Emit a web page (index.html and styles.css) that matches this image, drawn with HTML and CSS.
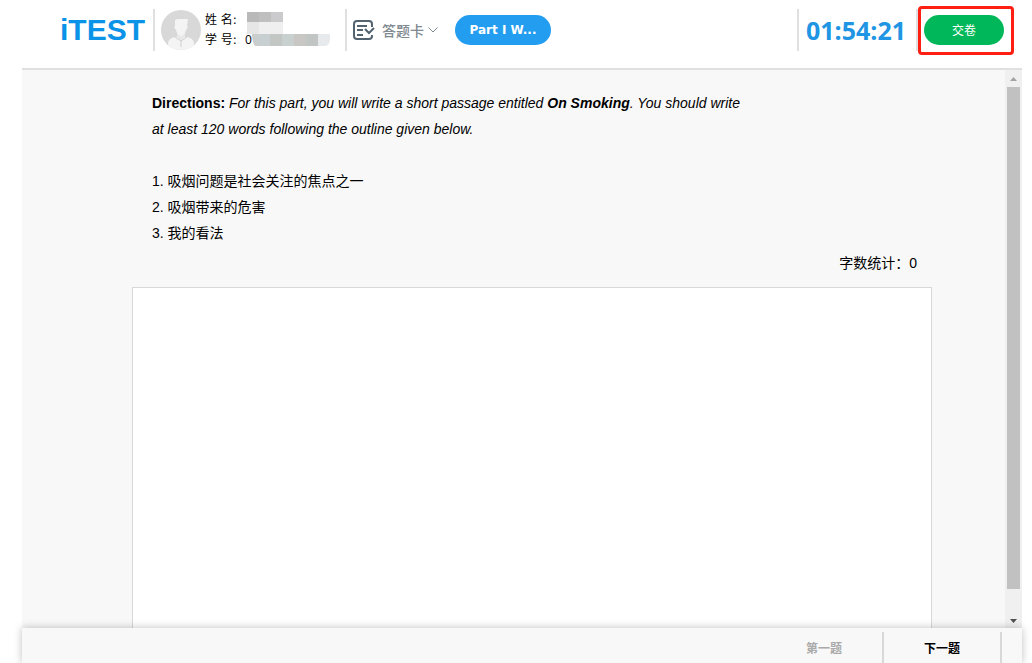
FILE: index.html
```html
<!DOCTYPE html>
<html lang="zh-CN">
<head>
<meta charset="UTF-8" />
<meta name="viewport" content="width=device-width, initial-scale=1" />
<title>iTEST</title>
<link rel="stylesheet" href="styles.css">
</head>
<body>
  <div class="page">
    <header class="topbar">
      <div class="logo">iTEST</div>
      <div class="user">
        <svg class="avatar" width="40" height="40" viewBox="0 0 40 40" aria-hidden="true">
          <defs><clipPath id="avatarClip"><circle cx="20" cy="20" r="20"/></clipPath></defs>
          <g clip-path="url(#avatarClip)">
            <rect width="40" height="40" fill="#d8d8d8"/>
            <path d="M7 40V33Q8 28 14 27L26 27Q32 28 33 33V40Z" fill="#f4f4f4"/>
            <path d="M16 22V27L20 31L24 27V22Z" fill="#e8e8e8"/>
            <path d="M14 10Q15 9 18 9H27L26 16L27 17L25 20Q24 25 20 26Q16 25 15 20L13 17L14 16Z" fill="#f4f4f4"/>
            <path d="M14 27L20 31L26 27M20 31V37" fill="none" stroke="#cfcfcf"/>
          </g>
        </svg>
        <div class="user-info">
          <div class="user-row"><span>姓 名:</span>
            <svg class="mask mask-name" width="36" height="22" viewBox="0 0 36 22" aria-hidden="true">
              <path d="M0 0H24V10H0Z" fill="#b9b9b9"/><path d="M12 0H24V10H12Z" fill="#bfbfbf"/><path d="M24 0H36V10H24Z" fill="#cbcbcd"/>
              <path d="M0 10H12V22H0Z" fill="#e6e6e6"/><path d="M12 10H36V22H12Z" fill="#efefef"/>
            </svg>
          </div>
          <div class="user-row"><span>学 号:</span><span class="user-no">0</span>
            <svg class="mask mask-no" width="78" height="12" viewBox="0 0 78 12" aria-hidden="true">
              <path d="M0 0H7V12H3Q0 8 0 0Z" fill="#c9cdcb"/><path d="M7 0H18V12H7Z" fill="#c7cfd0"/><path d="M18 0H30V12H18Z" fill="#c3c7c4"/>
              <path d="M30 0H42V12H30Z" fill="#c9d0d0"/><path d="M42 0H54V12H42Z" fill="#c8c7c3"/><path d="M54 0H66V12H54Z" fill="#c1c5c4"/>
              <path d="M66 0H78Q79 10 74 12H66Z" fill="#e6eaed"/>
            </svg>
          </div>
        </div>
      </div>
      <button class="sheet" type="button">
        <svg width="22" height="20" viewBox="0 0 22 20" fill="none" stroke="#53636f" stroke-width="2" aria-hidden="true">
          <path d="M19 7V4Q19 1 16 1H4Q1 1 1 4V16Q1 19 4 19H16Q19 19 19 16V15"/>
          <path d="M4 6H14M4 10H10M4 15H10"/>
          <path d="M12 9L16 13L21 8"/>
        </svg>
        <span>答题卡</span>
        <svg class="chevron" width="10" height="6" viewBox="0 0 10 6" fill="none" stroke="#7f8990" aria-hidden="true"><path d="M0.5 0.5L5 5L9.500 0.500"/></svg>
      </button>
      <button class="part" type="button">Part I W...</button>
      <div class="timer">01:54:21</div>
      <div class="submit-box">
        <button class="submit" type="button">交卷</button>
      </div>
    </header>

    <main class="content">
      <div class="question">
        <div class="directions">
          <p><strong>Directions:</strong> <em>For this part, you will write a short passage entitled <strong>On Smoking</strong>. You should write at least 120 words following the outline given below.</em></p>
          <p class="outline">1. 吸烟问题是社会关注的焦点之一<br>2. 吸烟带来的危害<br>3. 我的看法</p>
        </div>
        <label class="count" for="answer">字数统计：<span>0</span></label>
        <textarea class="answer" id="answer"></textarea>
      </div>
      <div class="scrollbar" aria-hidden="true">
        <svg width="7" height="4" viewBox="0 0 7 4"><path d="M0 4L3.500 0L7 4Z" fill="#a3a3a3"/></svg>
        <div class="track"><div class="thumb"></div></div>
        <svg width="7" height="4" viewBox="0 0 7 4"><path d="M0 0L3.500 4L7 0Z" fill="#505050"/></svg>
      </div>
    </main>

    <footer class="pager">
      <button type="button" disabled>第一题</button>
      <button type="button">下一题</button>
    </footer>
  </div>
</body>
</html>
```
FILE: styles.css
```css
:root {
  --blue: #0b93e8;
  --line: #e0e0e0;
  --panel: #f8f8f8;
  --cjk: "Noto Sans CJK SC";
}
* {
  box-sizing: border-box;
}
body {
  margin: 0;
  background: #fff;
  color: #000;
  font-family: "Liberation Sans", var(--cjk), sans-serif;
  font-size: 14px;
}
button {
  border: none;
  padding: 0;
  background: none;
  font-family: inherit;
  cursor: pointer;
}
.page {
  display: flex;
  flex-direction: column;
  height: 100vh;
  padding: 0 10px 0 22px;
  overflow: hidden;
}

/* top bar */
.topbar {
  display: flex;
  align-items: center;
  flex-shrink: 0;
  height: 70px;
  padding: 0 8px 8px 38px;
  border-bottom: 2px solid var(--line);
}
.logo {
  width: 93px;
  color: var(--blue);
  font-size: 30px;
  font-weight: bold;
}
.user {
  display: flex;
  align-items: center;
  gap: 4px;
  width: 192px;
  height: 42px;
  padding-left: 6px;
  border-left: 2px solid var(--line);
}
.avatar {
  flex-shrink: 0;
}
.user-row {
  position: relative;
  height: 20px;
  font-family: "DejaVu Sans", var(--cjk), sans-serif;
  font-size: 12px;
  line-height: 20px;
  white-space: nowrap;
}
.user-row span {
  display: inline-block;
  width: 40px;
}
.user-row .user-no {
  width: 8px;
  font-family: "Open Sans", sans-serif;
}
.mask {
  position: absolute;
}
.mask-name {
  left: 42px;
  top: 2px;
}
.mask-no {
  left: 47px;
  top: 4px;
}
.sheet {
  display: flex;
  align-items: center;
  gap: 7px;
  height: 42px;
  padding-left: 6px;
  border-left: 2px solid var(--line);
  color: #7f8990;
  font-size: 14px;
  font-weight: 500;
}
.chevron {
  margin-left: -3px;
}
.part {
  width: 96px;
  height: 30px;
  margin-left: 17px;
  border-radius: 15px;
  background: #239df0;
  color: #fff;
  font-family: "DejaVu Sans", sans-serif;
  font-size: 12px;
  font-weight: bold;
}
.timer {
  height: 42px;
  margin-left: auto;
  padding: 0 10px 0 7px;
  border-left: 2px solid var(--line);
  border-right: 2px solid var(--line);
  color: #2095e3;
  font-family: "Open Sans", sans-serif;
  font-size: 25px;
  font-weight: bold;
  line-height: 42px;
}
.submit-box {
  padding: 6px 7px 7px 3px;
  border: 3px solid #ff1e12;
  border-radius: 4px;
}
.submit {
  display: block;
  width: 80px;
  height: 30px;
  border-radius: 15px;
  background: #00b85a;
  color: #fff;
  font-size: 12px;
}

/* question area */
.content {
  display: flex;
  flex: 1;
  min-height: 0;
  background: var(--panel);
}
.question {
  display: flex;
  flex: 1;
  flex-direction: column;
  margin: 0 73px 0 110px;
}
.directions {
  max-width: 640px;
  padding: 20px 20px 0;
  line-height: 26px;
}
.directions p {
  margin: 0;
}
.directions .outline {
  margin-top: 26px;
}
.count {
  align-self: flex-end;
  margin: 4px 15px 11px 0;
  line-height: 26px;
}
.answer {
  display: block;
  flex: 1;
  width: 100%;
  border: 1px solid #d8d8d8;
  border-bottom: none;
  background: #fff;
  font: inherit;
  resize: none;
  outline: none;
}
.scrollbar {
  display: flex;
  flex-direction: column;
  align-items: center;
  width: 17px;
  padding: 7px 2px 5px;
  background: #f0f0f0;
}
.track {
  flex: 1;
  width: 13px;
  margin: 6px 0 4px;
}
.thumb {
  height: 95%;
  background: #c1c1c1;
}

/* footer */
.pager {
  position: relative;
  display: flex;
  justify-content: flex-end;
  flex-shrink: 0;
  height: 35px;
  padding: 4px 20px 0 0;
  background: var(--panel);
  box-shadow: 0 0 8px rgba(0,0,0,0.25);
}
.pager button {
  width: 118px;
  border-right: 2px solid #d8d8d8;
  color: #000;
  font-size: 12px;
  font-weight: bold;
}
.pager button:disabled {
  color: #aaa;
}
```
